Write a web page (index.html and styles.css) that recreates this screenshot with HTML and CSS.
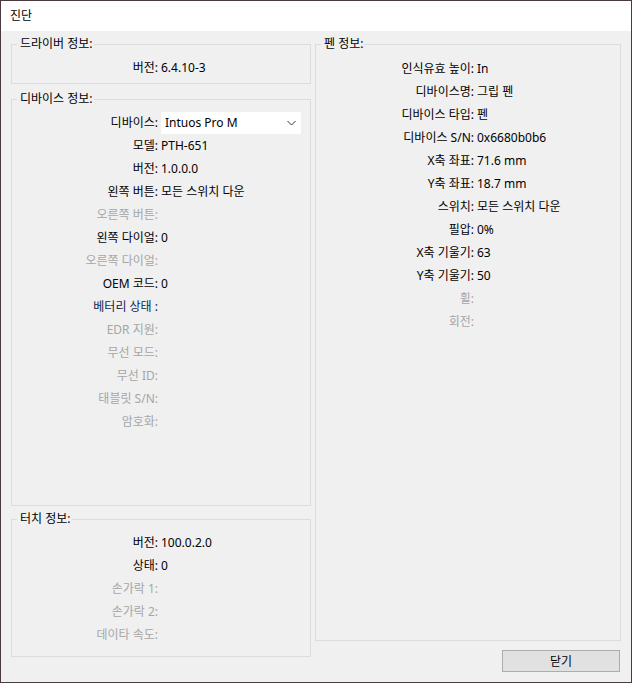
FILE: index.html
```html
<!DOCTYPE html>
<html lang="ko">

<head>
    <meta charset="UTF-8">
    <title>진단</title>
    <link rel="stylesheet" href="styles.css">
</head>

<body>

    <div class="window">
        <div class="titlebar">진단</div>

        <div class="main">
            <div class="column">
                <div class="group driver">
                    <div class="group-title">드라이버 정보:</div>
                    <div class="rows">
                        <div class="label">버전:</div><div class="value">6.4.10-3</div>
                    </div>
                </div>

                <div class="group device">
                    <div class="group-title">디바이스 정보:</div>
                    <div class="rows">
                        <div class="label">디바이스:</div>
                        <div class="value">
                            <div class="select">
                                <span>Intuos Pro M</span>
                                <svg width="9" height="6" viewBox="0 0 9 6"><polyline points="0.5,1 4.5,5 8.5,1" fill="none" stroke="#333" stroke-width="1"/></svg>
                            </div>
                        </div>
                        <div class="label">모델:</div><div class="value">PTH-651</div>
                        <div class="label">버전:</div><div class="value">1.0.0.0</div>
                        <div class="label">왼쪽 버튼:</div><div class="value">모든 스위치 다운</div>
                        <div class="label off">오른쪽 버튼:</div><div class="value"></div>
                        <div class="label">왼쪽 다이얼:</div><div class="value">0</div>
                        <div class="label off">오른쪽 다이얼:</div><div class="value"></div>
                        <div class="label">OEM 코드:</div><div class="value">0</div>
                        <div class="label battery">베터리 상태 :</div><div class="value"></div>
                        <div class="label off">EDR 지원:</div><div class="value"></div>
                        <div class="label off">무선 모드:</div><div class="value"></div>
                        <div class="label off">무선 ID:</div><div class="value"></div>
                        <div class="label off">태블릿 S/N:</div><div class="value"></div>
                        <div class="label off">암호화:</div><div class="value"></div>
                    </div>
                </div>

                <div class="group touch">
                    <div class="group-title">터치 정보:</div>
                    <div class="rows">
                        <div class="label">버전:</div><div class="value">100.0.2.0</div>
                        <div class="label">상태:</div><div class="value">0</div>
                        <div class="label off">손가락 1:</div><div class="value"></div>
                        <div class="label off">손가락 2:</div><div class="value"></div>
                        <div class="label off">데이타 속도:</div><div class="value"></div>
                    </div>
                </div>
            </div>

            <div class="column">
                <div class="group pen">
                    <div class="group-title">펜 정보:</div>
                    <div class="rows">
                        <div class="label">인식유효 높이:</div><div class="value">In</div>
                        <div class="label">디바이스명:</div><div class="value">그립 펜</div>
                        <div class="label">디바이스 타입:</div><div class="value">펜</div>
                        <div class="label">디바이스 S/N:</div><div class="value">0x6680b0b6</div>
                        <div class="label">X축 좌표:</div><div class="value">71.6 mm</div>
                        <div class="label">Y축 좌표:</div><div class="value">18.7 mm</div>
                        <div class="label">스위치:</div><div class="value">모든 스위치 다운</div>
                        <div class="label">필압:</div><div class="value">0%</div>
                        <div class="label">X축 기울기:</div><div class="value">63</div>
                        <div class="label">Y축 기울기:</div><div class="value">50</div>
                        <div class="label off">휠:</div><div class="value"></div>
                        <div class="label off">회전:</div><div class="value"></div>
                    </div>
                </div>

                <button class="close-btn">닫기</button>
            </div>
        </div>
    </div>

</body>

</html>
```

FILE: styles.css
```css
body {
    margin: 0;
    padding: 0;
    font-family: "Noto Sans", "Noto Sans CJK KR", sans-serif;
    font-size: 12px;
    color: #000;
}

.window {
    box-sizing: border-box;
    width: 632px;
    height: 683px;
    border: 1px solid #4b3a40;
    background-color: #f0f0f0;
}

.titlebar {
    height: 30px;
    line-height: 30px;
    padding-left: 9px;
    background-color: #fff;
}

.main {
    display: grid;
    grid-template-columns: 300px 306px;
    column-gap: 4px;
    align-items: start;
    padding: 13px 10px 0 10px;
}

.column {
    display: flex;
    flex-direction: column;
}

.group {
    box-sizing: border-box;
    border: 1px solid #dcdcdc;
}

.group-title {
    width: fit-content;
    margin: -9px 0 0 5px;
    padding: 0 1px 0 3px;
    line-height: 16px;
    background-color: #f0f0f0;
}

.rows {
    display: grid;
    grid-template-columns: 146px 1fr;
    grid-auto-rows: 23px;
    column-gap: 3px;
    padding-top: 4px;
    line-height: 23px;
}

.label {
    text-align: right;
    white-space: nowrap;
}

.label.off {
    color: #a6a6a6;
}

.label.battery {
    color: #0e1f4d;
}

.value {
    white-space: nowrap;
}

.driver {
    height: 40px;
}

.device {
    height: 407px;
    margin-top: 15px;
}

.touch {
    height: 138px;
    margin-top: 13px;
}

.pen {
    height: 597px;
}

.pen .rows {
    grid-template-columns: 158px 1fr;
    padding-top: 5px;
}

.select {
    display: flex;
    align-items: center;
    justify-content: space-between;
    width: 140px;
    height: 22px;
    box-sizing: border-box;
    margin-top: 1px;
    padding: 0 5px 0 4px;
    line-height: 22px;
    background-color: #fff;
}

.close-btn {
    align-self: flex-end;
    width: 118px;
    height: 22px;
    margin: 9px 1px 0 0;
    padding: 0;
    border: 1px solid #adadad;
    background-color: #e1e1e1;
    font-family: "Noto Sans", "Noto Sans CJK KR", sans-serif;
    font-size: 12px;
    color: #000;
}
```
